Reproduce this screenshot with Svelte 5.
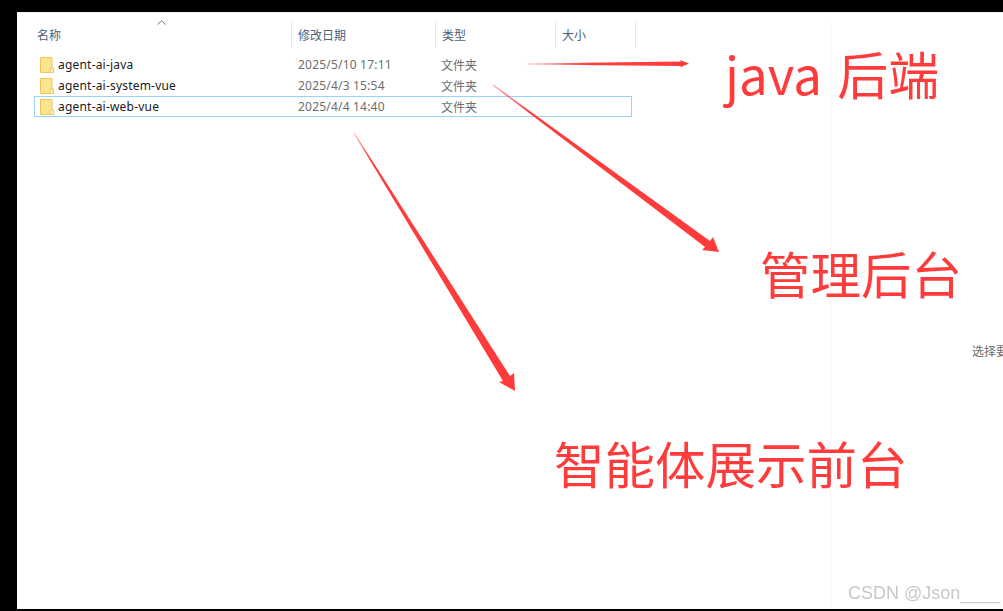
<script>
  const columns = [
    { label: '名称', width: 262 },
    { label: '修改日期', width: 144 },
    { label: '类型', width: 120 },
    { label: '大小', width: 80 }
  ];

  const folders = [
    { name: 'agent-ai-java', date: '2025/5/10 17:11', type: '文件夹' },
    { name: 'agent-ai-system-vue', date: '2025/4/3 15:54', type: '文件夹' },
    { name: 'agent-ai-web-vue', date: '2025/4/4 14:40', type: '文件夹', selected: true }
  ];
</script>

<div class="screen">
  <div class="explorer">
    <div class="list-pane">
      <svg class="sort-caret" width="9" height="5" viewBox="0 0 9 5">
        <path d="M0.5 4.5 L4.5 0.8 L8.5 4.5" fill="none" stroke="#6f7a86" stroke-width="1" />
      </svg>
      <div class="header">
        {#each columns as col}
          <div class="column" style="width: {col.width}px">{col.label}</div>
        {/each}
      </div>
      <div class="rows">
        {#each folders as folder}
          <div class="row" class:selected={folder.selected}>
            <span class="name">
              <svg class="folder" width="14" height="16" viewBox="0 0 14 16">
                <path d="M0.5 0.5 H12 V15.5 H0.5 Z" fill="#fde48f" stroke="#eec65c" />
                <path d="M10 15.5 V11 H13.5 V15.5 Z" fill="#fbeec0" stroke="#eec65c" />
              </svg>
              {folder.name}
            </span>
            <span class="date">{folder.date}</span>
            <span class="type">{folder.type}</span>
          </div>
        {/each}
      </div>
    </div>
    <div class="preview-pane">
      <div class="preview-hint">选择要预览的文件。</div>
    </div>
  </div>

  <svg class="arrows" width="1003" height="611" viewBox="0 0 1003 611">
    <defs>
      <linearGradient id="fade-1" x1="526" y1="64" x2="590" y2="64" gradientUnits="userSpaceOnUse">
        <stop offset="0" stop-color="#ff3b3b" stop-opacity="0.3" />
        <stop offset="1" stop-color="#ff3b3b" />
      </linearGradient>
      <linearGradient id="fade-2" x1="493" y1="85" x2="530" y2="112" gradientUnits="userSpaceOnUse">
        <stop offset="0" stop-color="#ff3b3b" stop-opacity="0.4" />
        <stop offset="1" stop-color="#ff3b3b" />
      </linearGradient>
      <linearGradient id="fade-3" x1="354" y1="133" x2="372" y2="161" gradientUnits="userSpaceOnUse">
        <stop offset="0" stop-color="#ff3b3b" stop-opacity="0.4" />
        <stop offset="1" stop-color="#ff3b3b" />
      </linearGradient>
    </defs>
    <polygon points="527,63.6 681,61.5 680,60 689,63.5 680,67.5 681,66 527,64.4" fill="url(#fade-1)" />
    <polygon points="493.4,84.6 710,241 713,237 719,252 702,250 705,247 492.6,85.4" fill="url(#fade-2)" />
    <polygon points="354.4,132.8 510,376 514,373 515,391 499,382 503,381 353.6,133.2" fill="url(#fade-3)" />
  </svg>

  <div class="note note-java">java 后端</div>
  <div class="note note-admin">管理后台</div>
  <div class="note note-web">智能体展示前台</div>
  <div class="watermark">CSDN @Json____</div>
</div>

<style>
  :global(body) {
    margin: 0;
    background: #000;
    overflow: hidden;
  }

  .screen {
    position: relative;
    width: 1003px;
    height: 611px;
    overflow: hidden;
    padding: 12px 0 2px 17px;
    box-sizing: border-box;
    font-family: "Noto Sans CJK SC", "Noto Sans", sans-serif;
  }

  .explorer {
    display: flex;
    height: 100%;
    background: #fff;
    border-top: 1px solid #f0f0f0;
    box-sizing: border-box;
  }

  .list-pane {
    position: relative;
    width: 813px;
    flex: none;
  }

  .preview-pane {
    flex: 1;
    min-width: 0;
    margin-top: 8px;
    border-left: 1px solid #f5f5f5;
    padding: 321px 0 0 141px;
    overflow: hidden;
  }

  .preview-hint {
    font-size: 12px;
    line-height: 18px;
    color: #6d6d6d;
    white-space: nowrap;
  }

  .sort-caret {
    position: absolute;
    left: 140px;
    top: 7px;
  }

  .header {
    display: flex;
    height: 27px;
    margin-top: 8px;
    padding-left: 13px;
  }

  .column {
    box-sizing: border-box;
    padding-left: 6px;
    border-right: 1px solid #e5e5e5;
    font-size: 12px;
    line-height: 27px;
    color: #4c607a;
  }

  .column:first-child {
    padding-left: 7px;
  }

  .rows {
    display: flex;
    flex-direction: column;
    margin-top: 6px;
    padding-left: 17px;
    width: 598px;
  }

  .row {
    display: grid;
    grid-template-columns: 263px 143px 1fr;
    box-sizing: border-box;
    height: 21px;
    align-items: center;
    border: 1px solid transparent;
    font-size: 12px;
  }

  .row.selected {
    border-color: #99d1ff;
  }

  .name {
    display: flex;
    align-items: center;
    gap: 4px;
    padding-left: 5px;
    font-family: "Noto Sans", sans-serif;
    font-size: 12px;
    letter-spacing: 0.2px;
    color: #1a1a1a;
  }

  .folder {
    flex: none;
  }

  .date,
  .type {
    color: #6d6d6d;
  }

  .date {
    font-family: "Noto Sans", sans-serif;
    letter-spacing: 0.2px;
  }

  .arrows {
    position: absolute;
    inset: 0;
    pointer-events: none;
  }

  .note {
    position: absolute;
    font-size: 51px;
    line-height: 60px;
    color: #ff3b3b;
    white-space: nowrap;
  }

  .note-java {
    left: 725px;
    top: 43px;
    word-spacing: 4px;
  }

  .note-admin {
    left: 760px;
    top: 242px;
    font-size: 50.5px;
  }

  .note-web {
    left: 554px;
    top: 432px;
    font-size: 50.5px;
  }

  .watermark {
    position: absolute;
    left: 848px;
    top: 581px;
    font-family: "Liberation Sans", sans-serif;
    font-size: 18px;
    line-height: 24px;
    color: #c8c8c8;
    filter: blur(0.5px);
    white-space: nowrap;
  }
</style>
